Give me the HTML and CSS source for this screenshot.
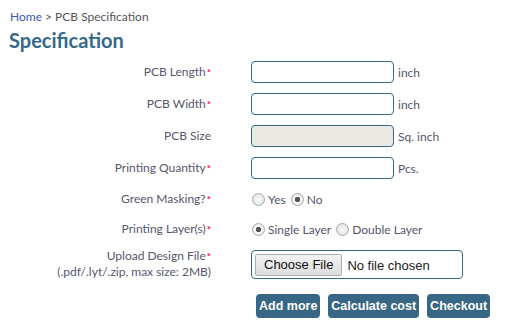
FILE: index.html
```html
<!DOCTYPE html>
<html lang="en">
<head>
  <meta charset="UTF-8">
  <title>PCB Specification</title>
  <link rel="stylesheet" href="styles.css">
</head>
<body>

<div class="page">
  <div class="crumbs"><a href="#">Home</a> &gt; PCB Specification</div>
  <h2>Specification</h2>

  <form class="spec-form">
    <div class="row">
      <label class="lbl"><span class="req">PCB Length</span></label>
      <div class="ctl"><input type="text" class="box"><span class="unit">inch</span></div>
    </div>
    <div class="row">
      <label class="lbl"><span class="req">PCB Width</span></label>
      <div class="ctl"><input type="text" class="box"><span class="unit">inch</span></div>
    </div>
    <div class="row">
      <label class="lbl"><span>PCB Size</span></label>
      <div class="ctl"><input type="text" class="box" disabled><span class="unit">Sq. inch</span></div>
    </div>
    <div class="row">
      <label class="lbl"><span class="req">Printing Quantity</span></label>
      <div class="ctl"><input type="text" class="box"><span class="unit">Pcs.</span></div>
    </div>
    <div class="row short">
      <label class="lbl"><span class="req">Green Masking?</span></label>
      <div class="ctl">
        <label class="opt"><input type="radio" name="mask">Yes</label>
        <label class="opt"><input type="radio" name="mask" checked>No</label>
      </div>
    </div>
    <div class="row short">
      <label class="lbl"><span class="req">Printing Layer(s)</span></label>
      <div class="ctl">
        <label class="opt"><input type="radio" name="layer" checked>Single Layer</label>
        <label class="opt"><input type="radio" name="layer">Double Layer</label>
      </div>
    </div>
    <div class="row upload">
      <label class="lbl">
        <span class="req">Upload Design File</span>
        <span class="hint">(.pdf/.lyt/.zip, max size: 2MB)</span>
      </label>
      <div class="ctl"><div class="file-wrap"><input type="file" class="file"></div></div>
    </div>
    <div class="actions">
      <button type="button">Add more</button>
      <button type="button">Calculate cost</button>
      <button type="button">Checkout</button>
    </div>
  </form>
</div>

</body>
</html>
```

FILE: styles.css
```css
* {
  margin: 0;
  padding: 0;
  box-sizing: border-box;
}
body {
  font-family: Lato, "Open Sans", sans-serif;
  background: #ffffff;
  color: #55566c;
}
.page {
  padding: 9px 0 0 10px;
}
.crumbs {
  font-size: 12px;
  line-height: 16px;
  color: #555;
}
.crumbs a {
  color: #3a55c8;
  text-decoration: none;
}
h2 {
  font-size: 20px;
  line-height: 26px;
  margin: 2px 0 0 -1px;
  color: #35688a;
  font-weight: bold;
}
.spec-form {
  margin-top: 8px;
}
.row {
  display: flex;
  align-items: center;
  height: 22px;
  margin-bottom: 10px;
}
.row.short {
  height: 20px;
}
.row.upload {
  height: 30px;
  margin-bottom: 15px;
}
.lbl {
  width: 201px;
  display: flex;
  flex-direction: column;
  align-items: flex-end;
  font-size: 12px;
  line-height: 16px;
}
.req::after {
  content: "*";
  vertical-align: top;
  margin-left: 1px;
  color: #e8141b;
  font-size: 10px;
  font-weight: bold;
}
.hint {
  font-size: 12px;
}
.ctl {
  margin-left: 40px;
  display: flex;
  align-items: center;
  font-size: 12px;
}
.box {
  width: 143px;
  height: 22px;
  border: 1px solid #35688a;
  border-radius: 4px;
  background: #fff;
  outline: none;
}
.box:disabled {
  background: #eae9e3;
}
.unit {
  margin-left: 4px;
}
.opt {
  display: flex;
  align-items: center;
  margin-right: 4px;
}
.opt input {
  appearance: none;
  width: 13px;
  height: 13px;
  border: 1px solid #a8a8a8;
  border-radius: 50%;
  background: radial-gradient(circle, #fafafa, #dcdcdc);
  margin: 0 3px 0 1px;
}
.opt input:checked {
  background: radial-gradient(circle, #555 0 2.5px, #fafafa 3px, #dcdcdc);
}
.file-wrap {
  width: 212px;
  height: 29px;
  border: 1px solid #35688a;
  border-radius: 4px;
  padding: 3px 0 0 3px;
}
.file {
  font-family: "Liberation Sans", Arial, sans-serif;
  font-size: 13px;
  color: #222;
}
.file::file-selector-button {
  font-family: "Liberation Sans", Arial, sans-serif;
  font-size: 13px;
  height: 22px;
  padding: 0 8px;
  margin-right: 5px;
  border: 1px solid #adadad;
  border-radius: 2px;
  background: linear-gradient(#f2f2f2, #dddddd);
  color: #111;
}
.actions {
  display: flex;
  gap: 8px;
  margin-left: 246px;
}
.actions button {
  font-family: "Liberation Sans", Arial, sans-serif;
  font-size: 12.5px;
  font-weight: bold;
  height: 24px;
  padding: 0 3px;
  border: none;
  border-radius: 4px;
  background: #386785;
  color: #fff;
}
```
